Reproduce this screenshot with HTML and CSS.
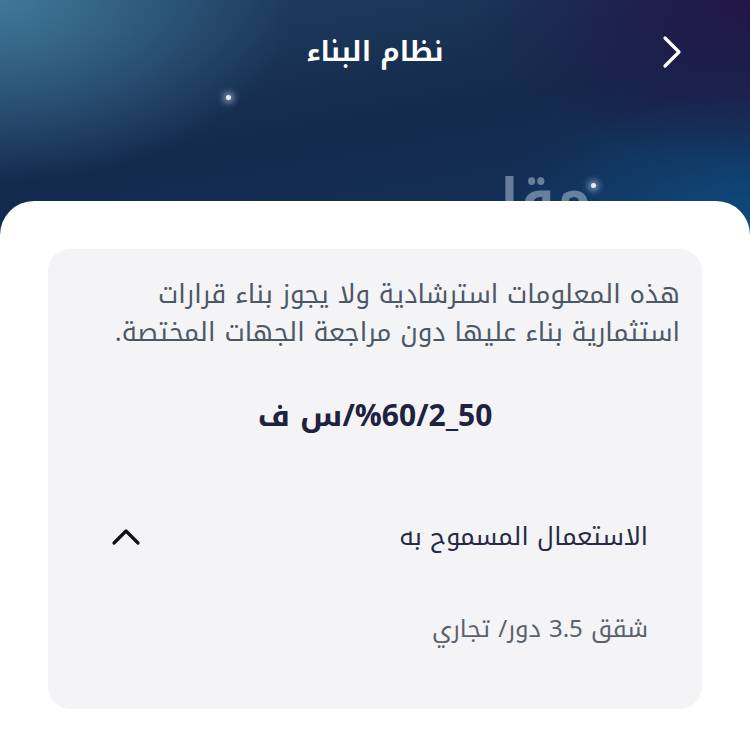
FILE: index.html
```html
<!DOCTYPE html>
<html lang="ar" dir="rtl">
<head>
<meta charset="utf-8">
<link rel="stylesheet" href="styles.css">
</head>
<body>
<div class="screen">
  <header class="hero">
    <div class="topbar">
      <button class="back" aria-label="رجوع">
        <svg width="24" height="34" viewBox="0 0 24 34"><path d="M5 3 L19 17 L5 31" fill="none" stroke="#fff" stroke-width="3.2" stroke-linecap="round" stroke-linejoin="round"/></svg>
      </button>
      <h1 class="title">نظام البناء</h1>
      <span class="spacer"></span>
    </div>
    <span class="star star-a"></span>
    <span class="star star-b"></span>
    <span class="ghost">مقا</span>
  </header>
  <main class="sheet">
    <section class="card">
      <p class="note">هذه المعلومات استرشادية ولا يجوز بناء قرارات استثمارية بناء عليها دون مراجعة الجهات المختصة.</p>
      <p class="code"><bdo dir="ltr">ف س/%60/2_50</bdo></p>
      <div class="usage">
        <div class="usage-head">
          <span class="usage-title">الاستعمال المسموح به</span>
          <svg class="caret" width="32" height="20" viewBox="0 0 32 20"><path d="M4 16 L16 4 L28 16" fill="none" stroke="#111" stroke-width="3.2" stroke-linecap="round" stroke-linejoin="round"/></svg>
        </div>
        <p class="usage-value">شقق 3.5 دور/ تجاري</p>
      </div>
    </section>
  </main>
</div>
</body>
</html>
```
FILE: styles.css
```css
* { box-sizing: border-box; }
html, body { margin: 0; padding: 0; }
body {
  width: 750px;
  height: 731px;
  overflow: hidden;
  background: #fff;
  font-family: "Noto Kufi Arabic", "Noto Sans Arabic", "DejaVu Sans", sans-serif;
}
.screen {
  position: relative;
  height: 731px;
  background:
    radial-gradient(ellipse 420px 260px at 0% 0%, rgba(70,130,165,0.85), rgba(70,130,165,0) 70%),
    radial-gradient(ellipse 380px 220px at 100% 0%, rgba(35,20,70,0.95), rgba(35,20,70,0) 75%),
    radial-gradient(ellipse 360px 200px at 100% 100%, rgba(14,80,135,0.9), rgba(14,80,135,0) 75%),
    linear-gradient(170deg, #1f3f60 0%, #142a4d 50%, #12305a 100%);
  background-size: 750px 240px, 750px 240px, 750px 240px, 750px 240px;
  background-repeat: no-repeat;
  display: flex;
  flex-direction: column;
}
.hero {
  position: relative;
  height: 201px;
  flex: none;
}
.topbar {
  display: flex;
  align-items: center;
  justify-content: space-between;
  padding: 30px 58px 0 58px;
  height: 74px;
}
.back {
  width: 40px;
  height: 40px;
  border: 0;
  background: none;
  padding: 0;
  display: flex;
  align-items: center;
  justify-content: center;
}
.spacer { width: 40px; }
.title {
  margin: 0;
  color: #fff;
  font-size: 27px;
  font-weight: 700;
}
.star {
  position: absolute;
  width: 5px;
  height: 5px;
  border-radius: 50%;
  background: #e8eef5;
  box-shadow: 0 0 6px 3px rgba(200,220,255,0.55);
}
.star-a { left: 226px; top: 95px; }
.star-b { left: 591px; top: 183px; }
.ghost {
  position: absolute;
  left: 500px;
  top: 172px;
  font-size: 54px;
  font-weight: 700;
  color: rgba(160,180,200,0.6);
  line-height: 1;
}
.sheet {
  position: relative;
  z-index: 1;
  flex: 1;
  background: #fff;
  border-radius: 34px 34px 0 0;
  padding: 48px 48px 0;
}
.card {
  background: #f4f4f6;
  border-radius: 22px;
  padding: 27px 22px 57px 22px;
}
.note {
  margin: 0;
  color: #4d5866;
  font-size: 26px;
  line-height: 38px;
  text-align: right;
}
.code {
  margin: 36px 0 0;
  text-align: center;
  color: #1f2240;
  font-size: 30px;
  font-weight: 700;
}
.usage {
  padding: 69px 32px 0;
}
.usage-head {
  display: flex;
  align-items: center;
  justify-content: space-between;
}
.usage-title {
  color: #272a44;
  font-size: 25px;
}
.caret { margin-left: 8px; }
.usage-value {
  margin: 46px 0 0;
  color: #59616d;
  font-size: 24px;
  text-align: right;
}
```
